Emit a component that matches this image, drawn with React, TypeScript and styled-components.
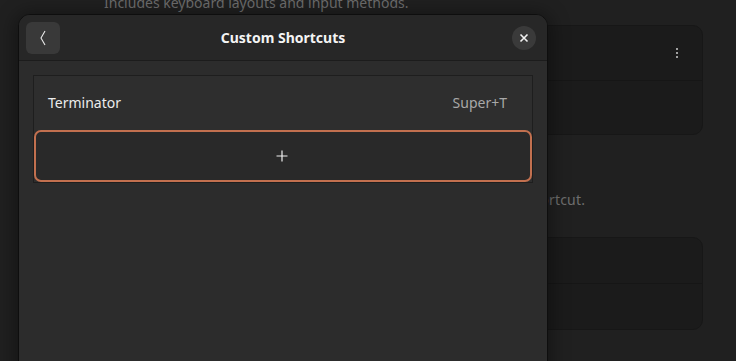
import React from "react";
import styled, { createGlobalStyle } from "styled-components";

const Global = createGlobalStyle`
  html, body { margin: 0; padding: 0; background: #202020; overflow: hidden; }
  body { font-family: "Noto Sans", "Open Sans", sans-serif; }
  #root { width: 736px; height: 361px; position: relative; overflow: hidden; }
`;

const Page = styled.div`
  width: 736px;
  height: 361px;
  background: #202020;
  display: flex;
  justify-content: flex-start;
  padding-left: 104px;
  box-sizing: border-box;
  overflow: hidden;
`;

const Column = styled.div`
  width: 599px;
  display: flex;
  flex-direction: column;
  margin-top: -7px;
`;

const Caption = styled.div<{ $mt?: number; $ls?: number }>`
  font-size: 14px;
  line-height: 20px;
  color: #6e6e6e;
  letter-spacing: ${(p) => p.$ls ?? 0}px;
  margin-top: ${(p) => p.$mt ?? 0}px;
  white-space: nowrap;
`;

const Card = styled.div<{ $mt?: number }>`
  margin-top: ${(p) => p.$mt ?? 0}px;
  background: #1b1b1b;
  border: 1px solid #171717;
  border-radius: 10px;
  display: flex;
  flex-direction: column;
`;

const CardRow = styled.div<{ $h: number; $last?: boolean }>`
  height: ${(p) => p.$h}px;
  border-bottom: ${(p) => (p.$last ? "none" : "1px solid #161616")};
  display: flex;
  align-items: center;
  justify-content: flex-end;
  padding-right: 24px;
`;

const Dots = styled.div`
  display: flex;
  flex-direction: column;
  gap: 2px;
  span {
    width: 2px;
    height: 2px;
    background: #a0a0a0;
    display: block;
  }
`;

const Dialog = styled.div`
  position: absolute;
  left: 18px;
  top: 14px;
  width: 530px;
  height: 380px;
  box-sizing: border-box;
  border: 1px solid #0e0e0e;
  border-radius: 12px 12px 0 0;
  background: #2c2c2c;
  box-shadow: 0 2px 18px 4px rgba(0, 0, 0, 0.35);
  display: flex;
  flex-direction: column;
  overflow: hidden;
`;

const Header = styled.div`
  height: 45px;
  background: #272727;
  border-bottom: 1px solid #1c1c1c;
  display: flex;
  align-items: center;
  justify-content: space-between;
  padding: 0 11px 0 7px;
  position: relative;
`;

const Title = styled.div`
  position: absolute;
  left: 0;
  right: 0;
  text-align: center;
  font-weight: 700;
  font-size: 14px;
  color: #f4f4f4;
  pointer-events: none;
`;

const BackButton = styled.button`
  width: 34px;
  height: 32px;
  border: none;
  border-radius: 6px;
  background: #393939;
  display: flex;
  align-items: center;
  justify-content: center;
  padding: 0;
`;

const CloseButton = styled.button`
  width: 24px;
  height: 24px;
  border: none;
  border-radius: 50%;
  background: #3a3a3a;
  display: flex;
  align-items: center;
  justify-content: center;
  padding: 0;
`;

const Body = styled.div`
  padding: 14px 14px 0 14px;
  display: flex;
  flex-direction: column;
`;

const List = styled.div`
  border: 1px solid #1e1e1e;
  background: #2e2e2e;
  display: flex;
  flex-direction: column;
`;

const ShortcutRow = styled.div`
  height: 54px;
  display: flex;
  align-items: center;
  justify-content: space-between;
  padding: 0 25px 0 14px;
  font-size: 14px;
  padding-bottom: 1px;
  box-sizing: border-box;
`;

const Name = styled.span`
  color: #ececec;
`;

const Accel = styled.span`
  color: #a8a8a8;
`;

const AddRow = styled.div`
  height: 52px;
  box-sizing: border-box;
  border: 2px solid #c2704f;
  border-radius: 7px;
  background: #292929;
  display: flex;
  align-items: center;
  justify-content: center;
  padding-right: 2px;
`;

export default function App() {
  return (
    <>
      <Global />
      <Page>
        <Column>
          <Caption>Includes keyboard layouts and input methods.</Caption>
          <Card $mt={12}>
            <CardRow $h={54}>
              <Dots>
                <span />
                <span />
                <span />
              </Dots>
            </CardRow>
            <CardRow $h={53} $last />
          </Card>
          <Caption $mt={55} $ls={0.22}>
            Define keyboard shortcuts for custom actions. Select to edit a shortcut.
          </Caption>
          <Card $mt={27}>
            <CardRow $h={45} />
            <CardRow $h={45} $last />
          </Card>
        </Column>
      </Page>
      <Dialog>
        <Header>
          <BackButton aria-label="Back">
            <svg width="10" height="16" viewBox="0 0 10 16">
              <path d="M7 1 L3 8 L7 15" fill="none" stroke="#e8e8e8" strokeWidth="1.1" />
            </svg>
          </BackButton>
          <Title>Custom Shortcuts</Title>
          <CloseButton aria-label="Close">
            <svg width="10" height="10" viewBox="0 0 10 10">
              <path d="M1.5 1.5 L8.5 8.5 M8.5 1.5 L1.5 8.5" stroke="#f2f2f2" strokeWidth="1.6" />
            </svg>
          </CloseButton>
        </Header>
        <Body>
          <List>
            <ShortcutRow>
              <Name>Terminator</Name>
              <Accel>Super+T</Accel>
            </ShortcutRow>
            <AddRow>
              <svg width="12" height="12" viewBox="0 0 12 12">
                <path d="M6 0.5 V11.5 M0.5 6 H11.5" stroke="#f0f0f0" strokeWidth="1.2" />
              </svg>
            </AddRow>
          </List>
        </Body>
      </Dialog>
    </>
  );
}
